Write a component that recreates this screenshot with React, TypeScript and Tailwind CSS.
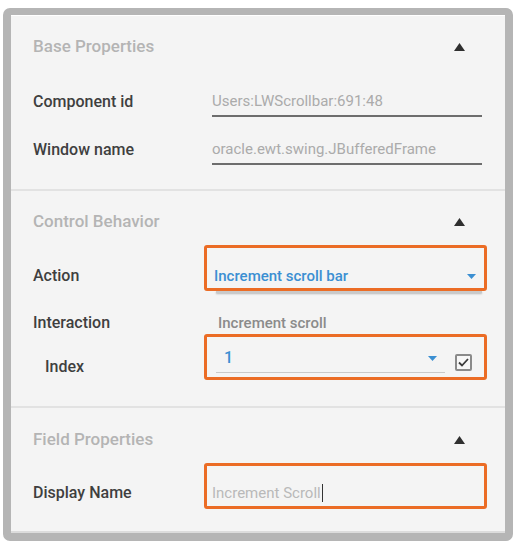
import React from "react"

const font = { fontFamily: "Roboto, 'Noto Sans', sans-serif" }

function UpTriangle() {
  return (
    <svg width="11" height="8" viewBox="0 0 11 8" className="mr-[17px]">
      <path d="M5.5 0 L11 8 L0 8 Z" fill="#2f2f2f" />
    </svg>
  )
}

function Caret() {
  return (
    <svg width="9" height="5" viewBox="0 0 9 5">
      <path d="M0 0 L9 0 L4.5 5 Z" fill="#3b8fd2" />
    </svg>
  )
}

function Highlight({ top }: { top: string }) {
  return (
    <div
      className={`pointer-events-none absolute left-[193px] h-[46px] w-[283px] rounded-[3px] border-[3.5px] border-[#eb6c25] ${top}`}
    />
  )
}

function SectionHeader({ title }: { title: string }) {
  return (
    <div className="flex h-6 items-center justify-between">
      <span className="text-[17px] font-medium text-[#b4b4b4]">{title}</span>
      <UpTriangle />
    </div>
  )
}

function Label({ children, indent }: { children: React.ReactNode; indent?: boolean }) {
  return (
    <div className={`w-[179px] shrink-0 text-[16px] font-medium text-[#3f3f3f] ${indent ? "pl-3" : ""}`}>
      {children}
    </div>
  )
}

function ReadOnlyField({ label, value }: { label: string; value: string }) {
  return (
    <div className="flex h-12 items-center">
      <Label>{label}</Label>
      <div className="relative flex h-12 flex-1 items-center">
        <span className="-mt-[2px] text-[15px] text-[#ababab]">{value}</span>
        <div className="absolute bottom-[9px] left-0 right-0 h-[2px] bg-[#6d6d6d]" />
      </div>
    </div>
  )
}

export default function App() {
  return (
    <div className="h-[550px] w-[519px] bg-white pl-[3px] pt-[8px]" style={font}>
      <div className="h-[533px] w-[510px] rounded-[7px] border-[8px] border-t-[7px] border-[#b5b5b5] bg-[#b5b5b5]">
        <div className="relative flex h-full flex-col border-t border-white bg-[#f4f4f4]">
          {/* Base Properties */}
          <div className="flex h-[173px] flex-col pl-[22px] pr-[23px] pt-[19px]">
            <SectionHeader title="Base Properties" />
            <div className="h-[19px]" />
            <ReadOnlyField label="Component id" value="Users:LWScrollbar:691:48" />
            <ReadOnlyField label="Window name" value="oracle.ewt.swing.JBufferedFrame" />
          </div>

          <div className="h-[2px] bg-[#e2e2e2]" />

          {/* Control Behavior */}
          <div className="relative flex h-[215px] flex-col pl-[22px] pr-[23px] pt-[19px]">
            <SectionHeader title="Control Behavior" />
            <div className="h-[18px]" />
            <div className="flex h-12 items-center">
              <Label>Action</Label>
              <div className="relative flex h-12 flex-1 items-center pl-[2px] pr-[6px]">
                <span className="flex-1 text-[15px] font-medium text-[#3b8fd2]">Increment scroll bar</span>
                <Caret />
                <div className="absolute bottom-[7px] left-[4px] right-0 h-[2px] bg-[#c9c9c9] shadow-[0_1px_2px_rgba(0,0,0,0.25)]" />
              </div>
            </div>
            <div className="flex h-[46px] items-center">
              <Label>Interaction</Label>
              <span className="pl-[6px] text-[15px] font-medium text-[#8b8b8b]">Increment scroll</span>
            </div>
            <div className="flex h-[42px] items-center">
              <Label indent>Index</Label>
              <div className="flex flex-1 items-center">
                <div className="relative -mt-[18px] flex h-[30px] w-[233px] items-center pl-[12px] pr-[8px]">
                  <span className="flex-1 text-[16px] font-medium text-[#3b8fd2]">1</span>
                  <Caret />
                  <div className="absolute bottom-0 left-[4px] right-0 h-[1px] bg-[#c9c9c9]" />
                </div>
                <div className="-mt-[9px] ml-[10px] flex h-[17px] w-[17px] items-center justify-center rounded-[2px] border-2 border-[#8a8a8a] bg-[#f7f7f7]">
                  <svg width="11" height="9" viewBox="0 0 11 9">
                    <path d="M1 4.5 L4 7.5 L10 1" stroke="#3a3a3a" strokeWidth="1.8" fill="none" />
                  </svg>
                </div>
              </div>
            </div>
            <Highlight top="top-[54px]" />
            <Highlight top="top-[143px]" />
          </div>

          <div className="h-[2px] bg-[#e2e2e2]" />

          {/* Field Properties */}
          <div className="relative flex flex-1 flex-col pl-[22px] pr-[23px] pt-[20px]">
            <SectionHeader title="Field Properties" />
            <div className="h-[17px]" />
            <div className="flex h-12 items-center">
              <Label>Display Name</Label>
              <div className="flex items-center">
                <span className="text-[15px] text-[#b9b9b9]">Increment Scroll</span>
                <span className="ml-[1px] h-[18px] w-[1.5px] bg-[#333]" />
              </div>
            </div>
            <Highlight top="top-[55px]" />
          </div>
          <div className="h-[2px] bg-[#dcdcdc]" />
        </div>
      </div>
    </div>
  )
}
